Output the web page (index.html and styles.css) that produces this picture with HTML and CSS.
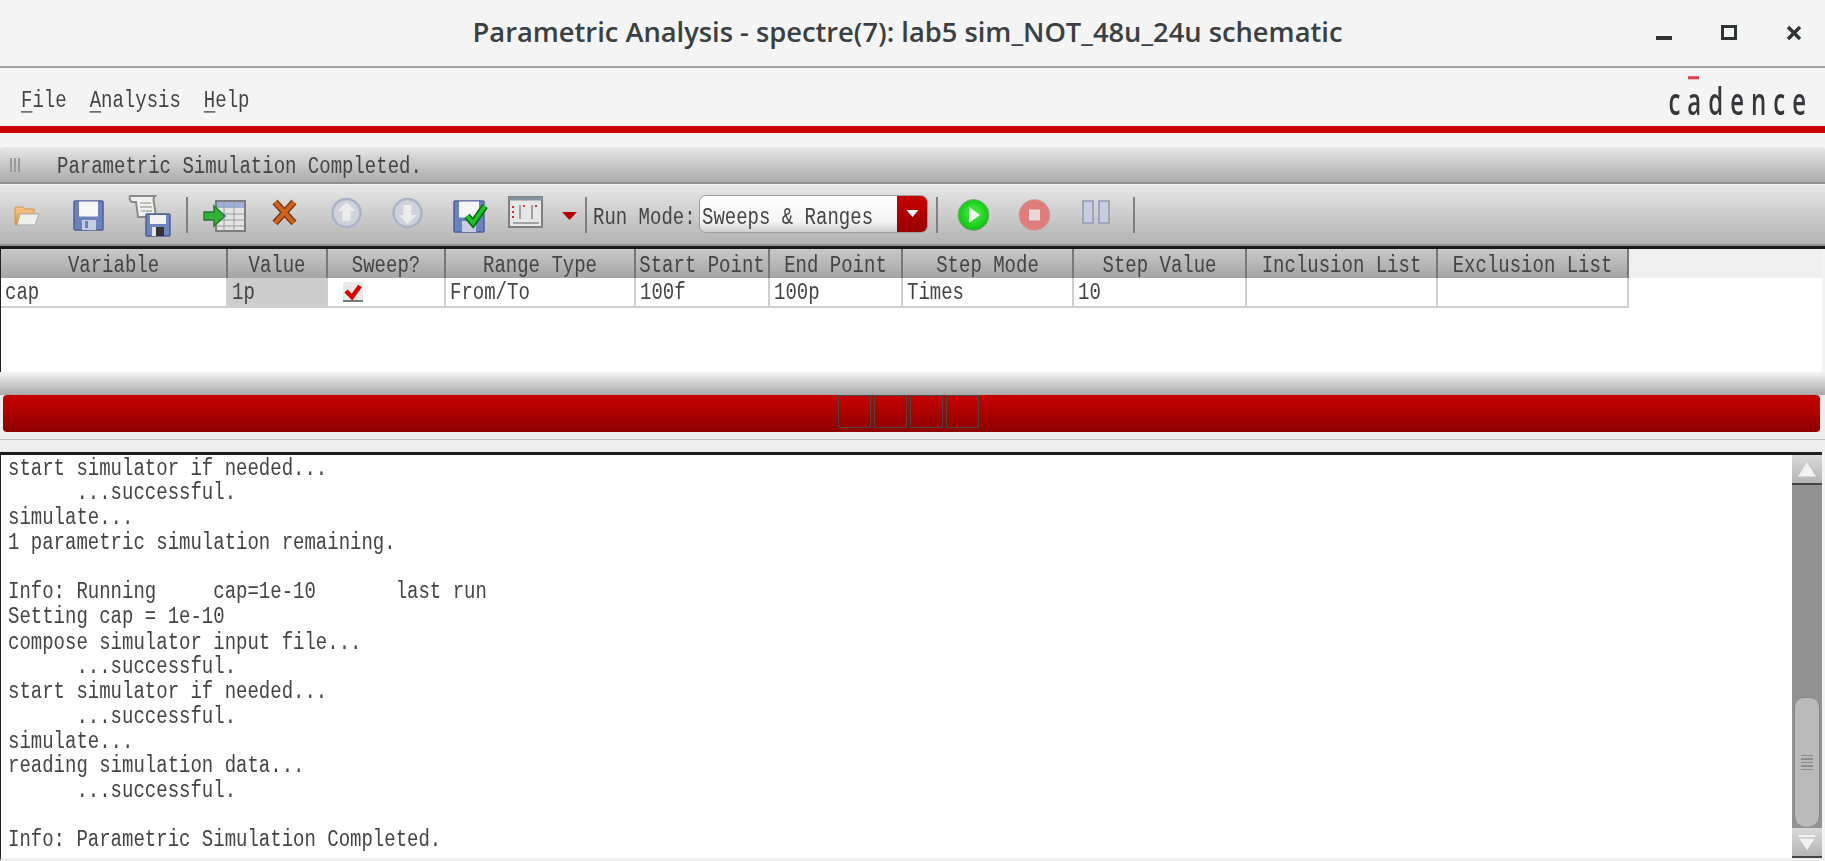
FILE: index.html
```html
<!DOCTYPE html>
<html lang="en">
<head>
<meta charset="utf-8">
<title>Parametric Analysis</title>
<link rel="stylesheet" href="styles.css">
</head>
<body>
<div class="window">
  <header class="titlebar">
    <div class="title">Parametric Analysis - spectre(7): lab5 sim_NOT_48u_24u schematic</div>
    <svg class="wm wm-min" viewBox="0 0 16 16"><rect x="0" y="11" width="16" height="4" fill="#2e3436"/></svg>
    <svg class="wm wm-max" viewBox="0 0 16 16"><rect x="1.5" y="1.5" width="13" height="12" fill="none" stroke="#2e3436" stroke-width="3"/></svg>
    <svg class="wm wm-close" viewBox="0 0 16 16"><path d="M2 2l12 12M14 2L2 14" stroke="#2e3436" stroke-width="3.4" fill="none"/></svg>
  </header>

  <nav class="menubar">
    <div class="menus">
      <span class="t"><u>F</u>ile</span>
      <span class="t"><u>A</u>nalysis</span>
      <span class="t"><u>H</u>elp</span>
    </div>
    <div class="logo">c<span class="logo-a">a</span>dence</div>
  </nav>
  <div class="redline"></div>

  <div class="status">
    <span class="grip"><i></i><i></i><i></i></span>
    <span class="t status-text">Parametric Simulation Completed.</span>
  </div>

  <div class="toolbar">
    <svg class="ic i-folder" viewBox="0 0 26 44">
      <defs><linearGradient id="fo" x1="0" y1="0" x2="0" y2="1"><stop offset="0" stop-color="#f7c88a"/><stop offset="1" stop-color="#d98f3e"/></linearGradient></defs>
      <path d="M1 14h8l2 2h9v6L3 32H1z" fill="url(#fo)" stroke="#cf9654"/>
      <path d="M3 32l3-11h19l-4 11z" fill="#eeeeea" stroke="#aaa"/>
    </svg>
    <svg class="ic i-floppy" viewBox="0 0 31 44">
      <rect x="1" y="8" width="29" height="29" rx="1" fill="#6a82bd" stroke="#4d5f96" stroke-width="1.5"/>
      <rect x="6" y="8.500" width="19" height="15" fill="#f6f6f6"/>
      <rect x="9" y="27" width="14" height="10" fill="#c5cde2"/>
      <rect x="12" y="28" width="3" height="7" fill="#6a82bd"/>
    </svg>
    <svg class="ic i-script" viewBox="0 0 43 44">
      <path d="M2 3h25c-2 2-2 4-1 7l2 14H10L8 9H4C2 8 1 5 2 3z" fill="#f0f0ec" stroke="#8a8a8a" stroke-width="2"/>
      <path d="M12 10h11M12 14h12M13 18h11" stroke="#aaa" stroke-width="1.500"/>
      <rect x="18" y="21" width="24" height="22" rx="1" fill="#6d86c0" stroke="#4c5f96" stroke-width="1.500"/>
      <rect x="22" y="22" width="16" height="9" fill="#f2f2f2"/>
      <rect x="24" y="34" width="12" height="9" fill="#333"/>
      <rect x="24" y="34" width="4" height="9" fill="#dfe3ee"/>
    </svg>
    <i class="sep s-a"></i>
    <svg class="ic i-table" viewBox="0 0 43 44">
      <rect x="13" y="8" width="29" height="30" fill="#e3e3e3" stroke="#7d7d7d" stroke-width="2"/>
      <rect x="14" y="9" width="27" height="6" fill="#9fb0d6"/>
      <path d="M14 21h27M14 27h27M14 33h27M21 9v29M31 9v29" stroke="#9b9b9b"/>
      <path d="M1 19h10v-6l11 10-11 10v-6H1z" fill="#35b13a" stroke="#1f7f2a" stroke-width="1.500"/>
    </svg>
    <svg class="ic i-x" viewBox="0 0 25 44">
      <path d="M3 9l19 21M22 9L3 30" stroke="#7a3a14" stroke-width="7" fill="none"/>
      <path d="M3 9l19 21M22 9L3 30" stroke="#d0631f" stroke-width="4" fill="none"/>
    </svg>
    <svg class="ic i-up" viewBox="0 0 31 44">
      <circle cx="15.500" cy="20" r="14" fill="#cfd2da" stroke="#aab3c8" stroke-width="2.500"/>
      <path d="M15.500 9l9 9h-5v10h-8V18h-5z" fill="#ececec"/>
    </svg>
    <svg class="ic i-down" viewBox="0 0 31 44">
      <circle cx="15.500" cy="20" r="14" fill="#cfd2da" stroke="#aab3c8" stroke-width="2.500"/>
      <path d="M15.500 31l9-9h-5V12h-8v10h-5z" fill="#ececec"/>
    </svg>
    <svg class="ic i-check" viewBox="0 0 35 44">
      <rect x="1" y="8" width="30" height="31" rx="1" fill="#6a82bd" stroke="#4d5f96" stroke-width="1.500"/>
      <rect x="6" y="8.500" width="20" height="16" fill="#f6f6f6"/>
      <rect x="9" y="28" width="14" height="11" fill="#c5cde2"/>
      <path d="M14 23l6 7L32 13" stroke="#0c6e14" stroke-width="7" fill="none"/>
      <path d="M14 23l6 7L32 13" stroke="#1fc52a" stroke-width="3.500" fill="none"/>
    </svg>
    <svg class="ic i-params" viewBox="0 0 35 44">
      <rect x="1" y="4" width="33" height="30" fill="#e6e6e6" stroke="#7f7f7f" stroke-width="2"/>
      <rect x="1" y="4" width="33" height="3.500" fill="#8393a3"/>
      <path d="M12 12v14M24 12v14M5 30h26" stroke="#8a8a8a" stroke-width="1.500"/>
      <path d="M5 13v2M5 18v2M5 23v2M16 12v2M28 12v2" stroke="#c83030" stroke-width="2"/>
    </svg>
    <svg class="ic i-drop" viewBox="0 0 15 44"><path d="M0 19h15l-7.500 8z" fill="#b80000"/></svg>
    <i class="sep s-b"></i>
    <span class="t run-label">Run Mode:</span>
    <div class="combo">
      <span class="combo-text"><span class="t">Sweeps &amp; Ranges</span></span>
      <span class="combo-btn"><svg class="combo-arrow" viewBox="0 0 12 7"><path d="M0 0h12L6 7z" fill="#fff"/></svg></span>
    </div>
    <i class="sep s-c"></i>
    <svg class="ic i-play" viewBox="0 0 33 44">
      <defs><radialGradient id="gr" cx=".5" cy=".45" r=".6"><stop offset="0" stop-color="#4df04d"/><stop offset=".8" stop-color="#14c814"/><stop offset="1" stop-color="#0c8a0c"/></radialGradient></defs>
      <circle cx="16.500" cy="22" r="15.500" fill="url(#gr)" stroke="#7fa87f"/>
      <path d="M12 14l11 8-11 8z" fill="#eef4ee"/>
    </svg>
    <svg class="ic i-stop" viewBox="0 0 33 44">
      <circle cx="16.500" cy="22" r="15.500" fill="#e07c7c" stroke="#c8a0a0"/>
      <rect x="11" y="16.500" width="11" height="11" fill="#e4d8d8"/>
    </svg>
    <svg class="ic i-pause" viewBox="0 0 28 44">
      <rect x="1" y="8" width="10" height="22" fill="#c8cede" stroke="#9ba6c0" stroke-width="2"/>
      <rect x="17" y="8" width="10" height="22" fill="#c8cede" stroke="#9ba6c0" stroke-width="2"/>
    </svg>
    <i class="sep s-d"></i>
  </div>

  <section class="sheet">
    <div class="row head">
      <div><span class="t">Variable</span></div><div><span class="t">Value</span></div><div><span class="t">Sweep?</span></div><div><span class="t">Range Type</span></div><div><span class="t">Start Point</span></div><div><span class="t">End Point</span></div><div><span class="t">Step Mode</span></div><div><span class="t">Step Value</span></div><div><span class="t">Inclusion List</span></div><div><span class="t">Exclusion List</span></div>
    </div>
    <div class="row body">
      <div><span class="t">cap</span></div>
      <div class="val"><span class="t">1p</span></div>
      <div class="chk"><svg class="checkbox" viewBox="0 0 22 22"><rect x="1" y="1" width="20" height="20" rx="1" fill="#e9e9e9"/><path d="M1 20h20" stroke="#555" stroke-width="1.500"/><path d="M4 10l6 6 8-11" stroke="#d80000" stroke-width="4.500" fill="none"/></svg></div>
      <div><span class="t">From/To</span></div><div><span class="t">100f</span></div><div><span class="t">100p</span></div><div><span class="t">Times</span></div><div><span class="t">10</span></div><div></div><div></div>
    </div>
  </section>

  <div class="splitter">
    <div class="sash">
      <i></i><i></i><i></i><i></i>
    </div>
  </div>
  <div class="under"></div>

  <section class="logpane">
    <pre class="log">start simulator if needed...
      ...successful.
simulate...
1 parametric simulation remaining.

Info: Running     cap=1e-10       last run
Setting cap = 1e-10
compose simulator input file...
      ...successful.
start simulator if needed...
      ...successful.
simulate...
reading simulation data...
      ...successful.

Info: Parametric Simulation Completed.</pre>
    <div class="vbar">
      <div class="vbtn"><svg class="vtri" viewBox="0 0 18 14"><path d="M9 0l9 14H0z" fill="#f2f2f2"/></svg></div>
      <div class="vtrack">
        <div class="vthumb"><i></i><i></i><i></i><i></i><i></i></div>
      </div>
      <div class="vbtn"><svg class="vtri" viewBox="0 0 18 16"><path d="M0 0h18v2H0zM1 4h16l-8 12z" fill="#f2f2f2"/></svg></div>
    </div>
  </section>
</div>
</body>
</html>
```
FILE: styles.css
```css
* { box-sizing: border-box; }
html, body { margin: 0; padding: 0; }
body { background: #fff; }
.window {
  width: 1825px;
  height: 861px;
  overflow: hidden;
  display: flex;
  flex-direction: column;
  font: 19px/1 "Liberation Mono", monospace;
  color: #444;
  background: #f4f4f4;
}

/* the bitmap font of the original is tall and narrow */
.t {
  display: inline-block;
  transform: scaleY(1.3);
  filter: blur(.3px);
}

/* title bar */
.titlebar {
  flex: 0 0 68px;
  display: flex;
  align-items: center;
  background: #f4f4f4;
  border-bottom: 2px solid #a2a2a0;
  position: relative;
}
.title {
  position: absolute;
  left: 0;
  right: 10px;
  top: 15px;
  text-align: center;
  font: 600 27.3px/34px "Open Sans", sans-serif;
  color: #3a4042;
}
.wm { width: 16px; height: 16px; display: block; margin-top: -1px; }
.wm-min { margin-left: 1656px; }
.wm-max { margin-left: 49px; }
.wm-close { margin-left: 49px; }

/* menu */
.menubar {
  flex: 0 0 58px;
  display: flex;
  align-items: center;
  justify-content: space-between;
  padding: 0 18px 0 21px;
  background: #f4f4f4;
}
.menus { display: flex; gap: 23px; margin-top: 8px; }
.menus u { text-underline-offset: 3px; }
.logo {
  font: 600 24px/1 "Open Sans", sans-serif;
  letter-spacing: 7px;
  color: #34363a;
  margin-top: 8px;
  margin-right: -6px;
  transform: scaleY(1.55);
}
.logo-a { position: relative; }
.logo-a::before {
  content: "";
  position: absolute;
  left: 1px;
  top: 1px;
  width: 11px;
  height: 2px;
  background: #e0404c;
}
.redline {
  flex: 0 0 21px;
  background: #f4f4f4;
  border-top: 7px solid #cc0000;
}

/* status */
.status {
  flex: 0 0 37px;
  display: flex;
  align-items: center;
  background: linear-gradient(#e6e6e6, #ababab);
  border-bottom: 2px solid #8e8e8e;
  border-radius: 3px 3px 0 0;
}
.grip { display: flex; gap: 2px; margin-left: 10px; width: 10px; }
.grip i { width: 2px; height: 14px; background: #9a9a9a; }
.status-text { margin-left: 37px; margin-top: 5px; }

/* toolbar */
.toolbar {
  flex: 0 0 65px;
  display: flex;
  align-items: center;
  background: linear-gradient(#e6e6e6, #b2b2b2);
  border-top: 1px solid #f4f4f4;
  border-bottom: 3px solid #1a1a1a;
  box-shadow: inset 0 -2px 0 #8e8e8e;
  padding-bottom: 2px;
}
.ic { height: 44px; display: block; flex: none; filter: blur(.5px); }
.i-folder { width: 26px; margin-left: 14px; }
.i-floppy { width: 31px; margin-left: 33px; }
.i-script { width: 43px; margin-left: 24px; }
.i-table { width: 43px; margin-left: 15px; }
.i-x { width: 25px; margin-left: 26px; }
.i-up { width: 31px; margin-left: 34px; }
.i-down { width: 31px; margin-left: 30px; }
.i-check { width: 35px; margin-left: 30px; }
.i-params { width: 35px; margin-left: 20px; }
.i-drop { width: 15px; margin-left: 19px; }
.i-play { width: 33px; margin-left: 19px; }
.i-stop { width: 33px; margin-left: 28px; }
.i-pause { width: 28px; margin-left: 31px; }
.sep { flex: none; width: 2px; height: 36px; background: #808080; }
.s-a { margin-left: 15px; }
.s-b { margin-left: 8px; }
.s-c { margin-left: 8px; }
.s-d { margin-left: 23px; }
.run-label { margin-left: 6px; width: 103px; white-space: nowrap; margin-top: 8px; }
.combo {
  margin-left: 3px;
  width: 229px;
  height: 38px;
  display: flex;
  background: linear-gradient(#fff, #f4f4f4 70%, #cfcfcf);
  border: 1px solid #9c9c9c;
  border-radius: 7px;
  margin-top: -2px;
}
.combo-text { flex: 1; padding: 3px 0 0 2px; line-height: 36px; white-space: pre; }
.combo-btn {
  flex: 0 0 30px;
  display: flex;
  align-items: center;
  justify-content: center;
  background: linear-gradient(#c80000, #980000);
  border-radius: 0 6px 6px 0;
}
.combo-arrow { width: 13px; height: 7px; display: block; }

/* table */
.sheet {
  flex: 0 0 123px;
  background: #fff;
  border-left: 1px solid #222;
  border-right: 3px solid #f2f2f2;
}
.row {
  display: grid;
  grid-template-columns: 227px 100px 118px 190px 134px 133px 171px 173px 191px 191px;
}
.head {
  height: 29px;
  background: #efefef;
}
.head div {
  background: linear-gradient(#c9c9c9, #a4a4a4);
  border-right: 2px solid #777;
  text-align: center;
  padding-top: 5px;
  line-height: 24px;
  white-space: nowrap;
}
.body { height: 30px; }
.body div {
  border-right: 2px solid #cfcfcf;
  border-bottom: 2px solid #cfcfcf;
  padding: 3px 0 0 4px;
  line-height: 25px;
  white-space: nowrap;
}
.body .val { background: #cdcdcd; }
.body .chk { padding: 0 0 0 14px; display: flex; align-items: center; }
.checkbox { width: 22px; height: 22px; display: block; }

/* sash */
.splitter {
  flex: 0 0 60px;
  padding: 23px 5px 0 3px;
  background: linear-gradient(#f4f4f4 0, #a8a8a8 23px, #ededed 23px);
}
.sash {
  height: 37px;
  background: linear-gradient(#c80000, #8f0000);
  border-radius: 4px;
  display: flex;
  padding-left: 835px;
  gap: 3px;
}
.sash i {
  width: 33px;
  height: 33px;
  border: 1.500px solid #474747;
}
.under {
  flex: 0 0 20px;
  background-image: linear-gradient(#eee 7px, #bdbdbd 7px, #bdbdbd 8px, #eee 8px);
}

/* log */
.logpane {
  flex: 0 0 409px;
  width: 1822px;
  display: flex;
  background: #fff;
  border-top: 3px solid #1d1d1d;
  border-left: 1px solid #222;
  border-bottom: 3px solid #efefef;
}
.log {
  flex: 1;
  margin: 0;
  padding: 1px 0 0 7px;
  font: inherit;
  line-height: 19.08px;
  color: #444;
  transform: scaleY(1.3);
  transform-origin: top left;
  filter: blur(.3px);
}
.vbar { flex: 0 0 30px; display: flex; flex-direction: column; }
.vbtn {
  flex: 0 0 30px;
  display: flex;
  align-items: center;
  justify-content: center;
  background: linear-gradient(#d9d9d9, #b4b4b4);
  border-bottom: 2px solid #444;
}
.vtri { width: 18px; height: 15px; display: block; }
.vtrack {
  flex: 1;
  background: #929292;
  display: flex;
  flex-direction: column;
  justify-content: flex-end;
  padding: 0 2px;
}
.vthumb {
  height: 131px;
  background: #bababa;
  border: 1px solid #858585;
  border-radius: 10px 10px 12px 12px;
  display: flex;
  flex-direction: column;
  align-items: center;
  justify-content: center;
  gap: 2px;
}
.vthumb i { width: 12px; height: 1.500px; background: #8c8c8c; }
```
